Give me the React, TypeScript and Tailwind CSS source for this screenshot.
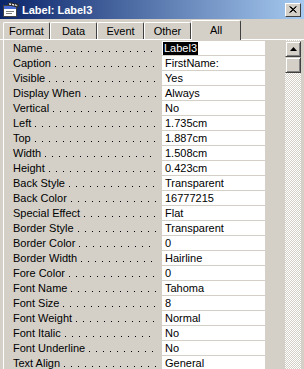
const rows: [string, string][] = [
  ['Name', 'Label3'],
  ['Caption', 'FirstName:'],
  ['Visible', 'Yes'],
  ['Display When', 'Always'],
  ['Vertical', 'No'],
  ['Left', '1.735cm'],
  ['Top', '1.887cm'],
  ['Width', '1.508cm'],
  ['Height', '0.423cm'],
  ['Back Style', 'Transparent'],
  ['Back Color', '16777215'],
  ['Special Effect', 'Flat'],
  ['Border Style', 'Transparent'],
  ['Border Color', '0'],
  ['Border Width', 'Hairline'],
  ['Fore Color', '0'],
  ['Font Name', 'Tahoma'],
  ['Font Size', '8'],
  ['Font Weight', 'Normal'],
  ['Font Italic', 'No'],
  ['Font Underline', 'No'],
  ['Text Align', 'General'],
]

const tabs = ['Format', 'Data', 'Event', 'Other']

function TitleIcon() {
  return (
    <svg width="16" height="15" viewBox="0 0 16 15" className="shrink-0">
      <rect x="0.5" y="3.5" width="13" height="11" fill="#fff" stroke="#404040" />
      <rect x="1" y="4" width="12" height="3" fill="#4a6cd4" />
      <rect x="3" y="9" width="8" height="1" fill="#808080" />
      <rect x="3" y="11" width="6" height="1" fill="#808080" />
      <path d="M6 0.5 L15.5 2.5 L15 5 L5.5 3 Z" fill="#fff" stroke="#202020" />
      <path d="M8 1 L9 3.5 M11 1.6 L12 4 M13.8 2 L14.6 4.5" stroke="#202020" />
    </svg>
  )
}

export default function App() {
  return (
    <div className="relative h-[369px] w-[304px] overflow-hidden bg-[#d4d0c8] font-['Tahoma','Liberation_Sans',sans-serif] text-[11px] leading-[14px] text-black">
      {/* title bar */}
      <div className="flex h-[19px] items-center bg-[linear-gradient(to_right,#0a246a,#a6caf0)] pl-[3px] pr-[3px]">
        <TitleIcon />
        <span className="ml-[3px] font-bold text-white">Label: Label3</span>
        <button
          type="button"
          className="ml-auto flex h-[14px] w-[16px] items-center justify-center border border-t-white border-l-white border-r-[#404040] border-b-[#404040] bg-[#d4d0c8]"
        >
          <svg width="8" height="7" viewBox="0 0 8 7">
            <path d="M0.5 0.5 L7 6.5 M1.5 0.5 L7.5 6.5 M7 0.5 L0.5 6.5 M7.5 0.5 L1.5 6.5" stroke="#000" />
          </svg>
        </button>
      </div>

      {/* tabs */}
      <div className="flex h-[21px] items-end border-b border-white pl-[3px]">
        {tabs.map((tab) => (
          <div
            key={tab}
            className="flex h-[17px] w-[47px] items-center justify-center rounded-t-[2px] border-t border-l border-r border-t-white border-l-white border-r-[#404040] pb-px"
          >
            {tab}
          </div>
        ))}
        <div className="relative -mb-px flex h-[20px] w-[50px] items-start justify-center rounded-t-[2px] border-t border-l border-r border-t-white border-l-white border-r-[#404040] bg-[#d4d0c8] pt-[2px]">
          All
        </div>
      </div>

      {/* panel */}
      <div className="ml-[3px] flex border-l border-white">
        <div className="flex w-[261px] flex-col">
          {rows.map(([label, value], i) => (
            <div key={label} className="flex h-[15px]">
              <div className="flex w-[158px] pl-[9px] pr-[6px]">
                <span className="self-center whitespace-nowrap">{label}</span>
                <span className="mb-[3px] ml-[4px] h-px flex-1 self-end bg-[linear-gradient(to_right,#000_1px,transparent_1px)] bg-[length:7px_1px] bg-repeat-x" />
              </div>
              <div className="mt-px flex h-[14px] w-[103px] items-center bg-white pl-px">
                {i === 0 ? (
                  <span className="bg-black px-px leading-[13px] text-white">{value}</span>
                ) : (
                  <span className="pl-[2px]">{value}</span>
                )}
              </div>
            </div>
          ))}
        </div>

        {/* scrollbar */}
        <div className="ml-[20px] flex w-[16px] flex-col bg-[repeating-conic-gradient(#ffffff_0_25%,#d4d0c8_0_50%)] bg-[length:2px_2px] pt-px">
          <div className="flex h-[16px] items-center justify-center border border-t-[#d4d0c8] border-l-[#d4d0c8] border-r-[#404040] border-b-[#404040] bg-[#d4d0c8] shadow-[inset_1px_1px_0_#fff,inset_-1px_-1px_0_#808080]">
            <svg width="7" height="4" viewBox="0 0 7 4">
              <path d="M3.5 0 L7 4 L0 4 Z" fill="#000" />
            </svg>
          </div>
          <div className="h-[16px] border border-t-[#d4d0c8] border-l-[#d4d0c8] border-r-[#404040] border-b-[#404040] bg-[#d4d0c8] shadow-[inset_1px_1px_0_#fff,inset_-1px_-1px_0_#808080]" />
          <div className="h-[320px]" />
        </div>
      </div>
    </div>
  )
}
